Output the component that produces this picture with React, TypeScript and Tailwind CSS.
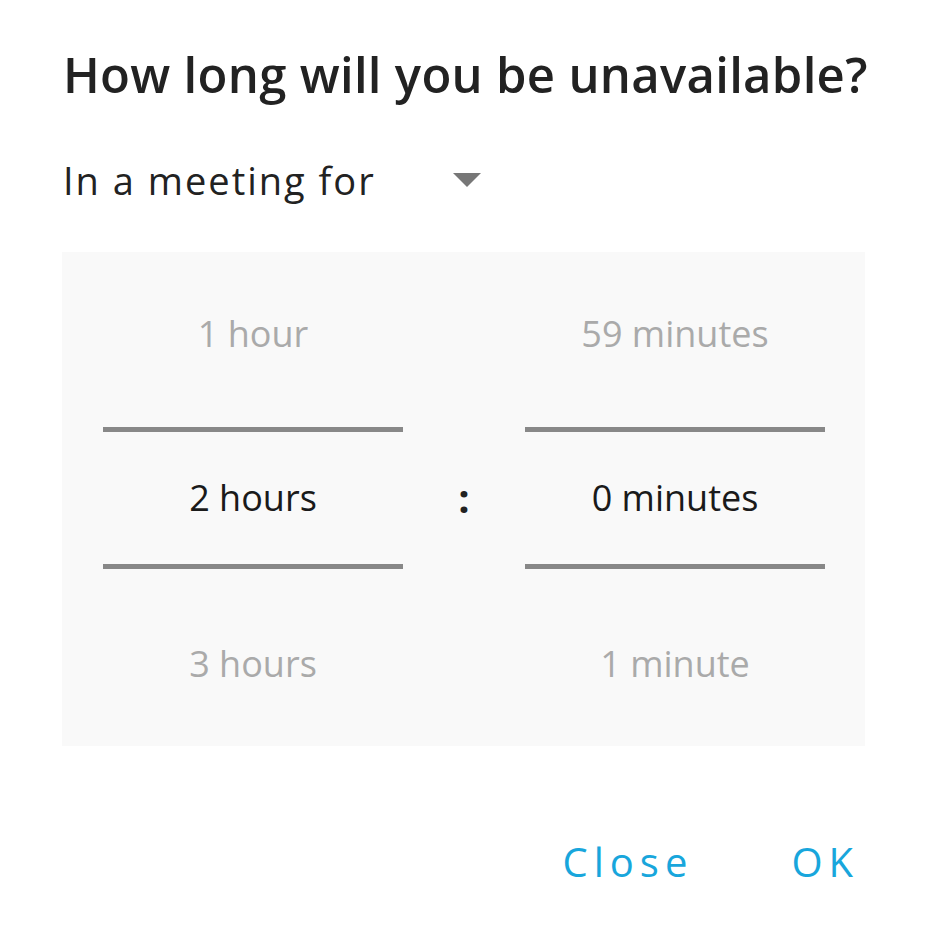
import React from "react";

export default function App() {
  const font = { fontFamily: "'Open Sans', 'Noto Sans', sans-serif" };
  return (
    <div className="w-[927px] h-[935px] bg-white text-[#222]" style={font}>
      <div className="pt-[44px] pl-[63px] pr-[30px]">
        <h1 className="text-[49px] leading-[60px] font-semibold tracking-[0.3px] text-[#222] whitespace-nowrap">
          How long will you be unavailable?
        </h1>
        <div className="mt-[50px] flex items-center h-[52px]">
          <span className="text-[38px] tracking-[2px] text-[#222] w-[390px]">In a meeting for</span>
          <svg width="28" height="14" viewBox="0 0 28 14">
            <polygon points="0,0 28,0 14,14" fill="#777" />
          </svg>
        </div>
      </div>
      <div className="mt-[46px] ml-[62px] w-[803px] h-[494px] bg-[#f9f9f9] flex pl-[41px] pr-[40px]">
        <Column top="1 hour" mid="2 hours" bottom="3 hours" />
        <div className="w-[122px] flex items-center justify-center text-[40px] font-bold text-[#222] pb-[2px]">:</div>
        <Column top="59 minutes" mid="0 minutes" bottom="1 minute" />
      </div>
      <div className="mt-[86px] flex justify-end pr-[68px] gap-[98px] text-[#18a6dc] text-[40px] tracking-[6px]">
        <span>Close</span>
        <span>OK</span>
      </div>
    </div>
  );
}

function Column({ top, mid, bottom }: { top: string; mid: string; bottom: string }) {
  return (
    <div className="w-[300px] flex flex-col">
      <div className="h-[165px] flex items-center justify-center text-[36px] text-[#aaa]">{top}</div>
      <div className="h-[165px] flex flex-col pt-[10px] pb-[12px]">
        <div className="h-[5px] bg-[#888]" />
        <div className="flex-1 flex items-center justify-center text-[36px] text-[#1a1a1a]">{mid}</div>
        <div className="h-[5px] bg-[#888]" />
      </div>
      <div className="h-[165px] flex items-center justify-center text-[36px] text-[#aaa]">{bottom}</div>
    </div>
  );
}
